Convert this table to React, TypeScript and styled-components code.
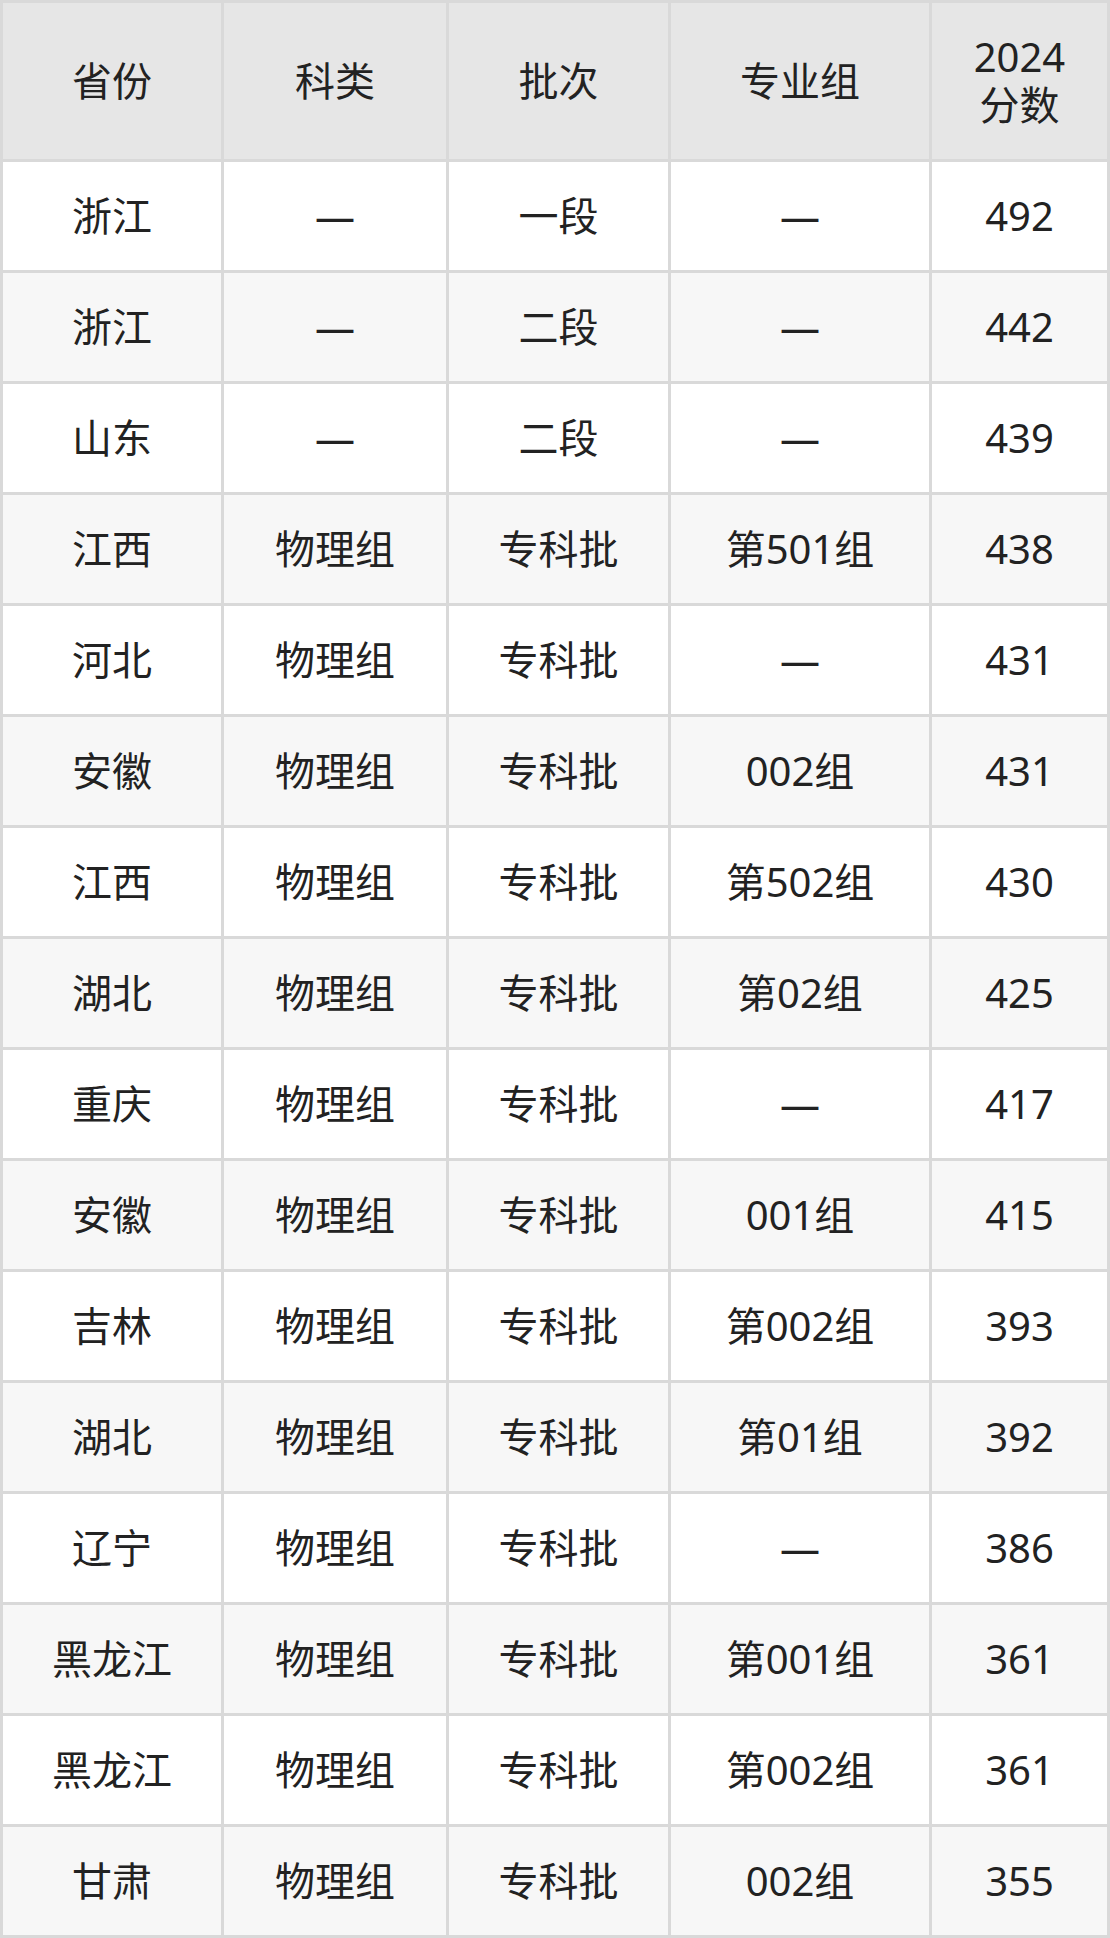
import React from "react";
import styled, { createGlobalStyle } from "styled-components";

const GlobalStyle = createGlobalStyle`
	html, body {
		margin: 0;
		padding: 0;
		background: #ffffff;
	}
	body {
		font-family: "Noto Sans", "Noto Sans CJK SC", sans-serif;
		color: #222222;
	}
`;

const Table = styled.table`
	width: 1110px;
	border-collapse: collapse;
	table-layout: fixed;
	border: 3px solid #d9d9d9;
`;

const HeadCell = styled.th<{ $width: number }>`
	width: ${(p) => p.$width}px;
	height: 156px;
	padding: 0;
	background-color: #e6e6e6;
	border: 3px solid #d9d9d9;
	font-size: 40px;
	font-weight: 400;
	line-height: 48px;
	text-align: center;
	vertical-align: middle;
	color: #222222;
`;

const Row = styled.tr<{ $striped: boolean }>`
	background-color: ${(p) => (p.$striped ? "#f7f7f7" : "#ffffff")};
`;

const Cell = styled.td`
	height: 108px;
	padding: 0;
	border: 3px solid #d9d9d9;
	font-size: 40px;
	line-height: 48px;
	text-align: center;
	vertical-align: middle;
	color: #222222;
`;

const columns = [
	{ title: "省份", width: 218 },
	{ title: "科类", width: 222 },
	{ title: "批次", width: 219 },
	{ title: "专业组", width: 258 },
	{ title: "2024\n分数", width: 175 },
];

const rows = [
	["浙江", "—", "一段", "—", "492"],
	["浙江", "—", "二段", "—", "442"],
	["山东", "—", "二段", "—", "439"],
	["江西", "物理组", "专科批", "第501组", "438"],
	["河北", "物理组", "专科批", "—", "431"],
	["安徽", "物理组", "专科批", "002组", "431"],
	["江西", "物理组", "专科批", "第502组", "430"],
	["湖北", "物理组", "专科批", "第02组", "425"],
	["重庆", "物理组", "专科批", "—", "417"],
	["安徽", "物理组", "专科批", "001组", "415"],
	["吉林", "物理组", "专科批", "第002组", "393"],
	["湖北", "物理组", "专科批", "第01组", "392"],
	["辽宁", "物理组", "专科批", "—", "386"],
	["黑龙江", "物理组", "专科批", "第001组", "361"],
	["黑龙江", "物理组", "专科批", "第002组", "361"],
	["甘肃", "物理组", "专科批", "002组", "355"],
];

const App = () => {
	return (
		<>
			<GlobalStyle />
			<Table>
				<thead>
					<tr>
						{columns.map((col) => (
							<HeadCell key={col.title} $width={col.width}>
								{col.title.split("\n").map((line, i) => (
									<React.Fragment key={line}>
										{i > 0 && <br />}
										{line}
									</React.Fragment>
								))}
							</HeadCell>
						))}
					</tr>
				</thead>
				<tbody>
					{rows.map((row, i) => (
						<Row key={i} $striped={i % 2 === 1}>
							{row.map((value, j) => (
								<Cell key={j}>{value}</Cell>
							))}
						</Row>
					))}
				</tbody>
			</Table>
		</>
	);
};

export default App;
